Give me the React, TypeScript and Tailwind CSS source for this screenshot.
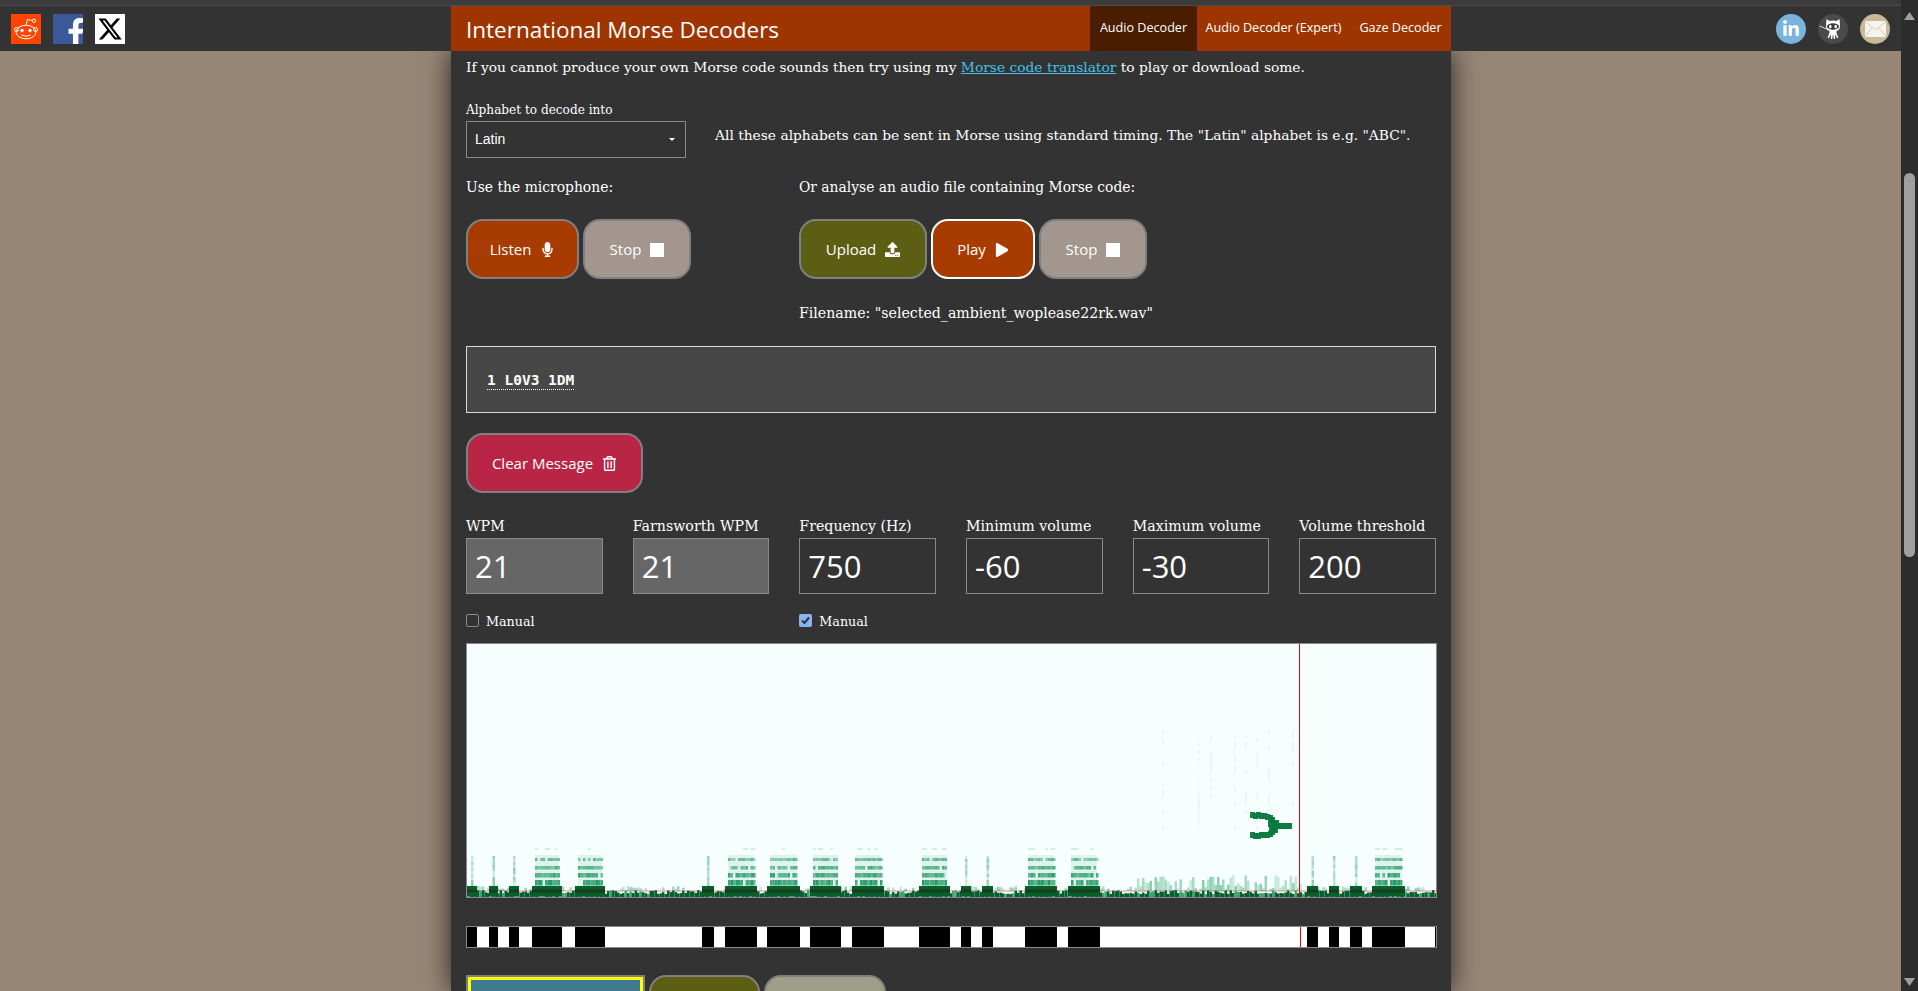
import { FaMicrophone, FaPlay, FaUpload, FaRegTrashAlt, FaFacebookF, FaLinkedinIn } from "react-icons/fa";
import { FaXTwitter } from "react-icons/fa6";
import type { ReactNode } from "react";

const SERIF = "font-['DejaVu_Serif',serif]";
const SANS = "font-['Open_Sans',sans-serif]";

// morse on/off segments, in page x coordinates
const SEGMENTS: [number, number][] = [
  [467, 477], [489, 498], [509, 519], [532, 562], [575, 605], [702, 714], [725, 757],
  [767, 800], [810, 841], [852, 884], [919, 950], [961, 971], [982, 993], [1025, 1057],
  [1068, 1100], [1307, 1318], [1329, 1339], [1350, 1362], [1372, 1405],
];

const makeRandom = (seed: number) => () => {
  seed = (seed * 1664525 + 1013904223) % 4294967296;
  return seed / 4294967296;
};

const Spectrogram = () => {
  const rnd = makeRandom(42);
  const cells: ReactNode[] = [];
  let k = 0;
  const cell = (x: number, y: number, w: number, h: number, fill: string, o = 1) =>
    cells.push(<rect key={k++} x={x} y={y} width={w} height={h} fill={fill} opacity={o} />);

  // threshold line sits under the signal
  cell(467, 890, 969, 2, "#f3b4b4", 0.8);

  // harmonics above each keyed segment
  SEGMENTS.forEach(([a, b]) => {
    if (b - a > 20) {
      cell(a + 3, 855, b - a - 6, 31, "#a6dcc6", 0.3);
      for (let x = a + 3; x < b - 3; x += 2.5) {
        [848, 858, 866, 873, 880].forEach((y, i) => {
          if (rnd() > (i === 0 ? 0.4 : 0.9)) return;
          const h = [2, 3, 3.5, 4.5, 5.5][i];
          cell(x, y, 2.5, h, "#0f8f55", i === 0 ? 0.15 : 0.25 + i * 0.09 + rnd() * 0.3);
        });
      }
    } else {
      const mid = (a + b) / 2;
      for (let y = 856; y < 886; y += 3) cell(mid - 1, y, 2.5, 3, "#0f8f55", 0.12 + rnd() * 0.35);
    }
  });

  // floor noise
  for (let x = 467; x < 1436; x += 2.5) {
    const loud = x > 1135 && x < 1300;
    const top = 890 + rnd() * 4;
    cell(x, top, 2.5, 898 - top, rnd() > 0.22 ? "#05602f" : "#3aa56f");
    if (rnd() > (loud ? 0.1 : 0.55)) {
      const h = (loud ? 14 : 3) * rnd() + 2;
      cell(x, 891 - h, 2.5, h, "#149a5c", 0.18 + rnd() * 0.3);
    }
  }

  // keyed carrier
  SEGMENTS.forEach(([a, b]) => {
    cell(a, 886, b - a, 10, "#05602f");
    cell(a, 889.5, b - a, 3, "#1c3e12");
  });

  // faint vertical traces
  [1162, 1210, 1198, 1234, 1245, 1256, 1268, 1292].forEach((x) => {
    for (let y = 730; y < 830; y += 4) {
      if (rnd() > 0.55) cell(x, y, 2, 4, "#b6e0ea", 0.2);
    }
  });

  // chirp
  const chirp = [
    [1250, 812], [1253, 813], [1256, 812], [1259, 813], [1262, 813], [1265, 814], [1268, 815], [1270, 817],
    [1271, 820], [1272, 823], [1271, 826], [1270, 829], [1268, 831], [1265, 832], [1262, 832], [1259, 832],
    [1256, 833], [1253, 833], [1250, 832], [1273, 822], [1276, 823], [1279, 823], [1282, 823], [1285, 823], [1287, 823],
    [1274, 820], [1273, 827], [1269, 825], [1268, 821],
  ];
  chirp.forEach(([x, y]) => cell(x, y, 5, 6, "#067a3e", 0.95));

  return (
    <svg viewBox="467 644 969 253" preserveAspectRatio="none" className="block h-full w-full">
      <rect x={467} y={644} width={969} height={253} fill="#f6fefe" />
      {cells}
      <rect x={1299} y={644} width={1} height={253} fill="#f00000" shapeRendering="crispEdges" />
    </svg>
  );
};

const MorseBar = () => (
  <svg viewBox="467 927 969 20" preserveAspectRatio="none" className="block h-full w-full" shapeRendering="crispEdges">
    <rect x={467} y={927} width={969} height={20} fill="#fff" />
    {SEGMENTS.map(([a, b]) => (
      <rect key={a} x={a} y={927} width={b - a} height={20} fill="#000" />
    ))}
    <rect x={1300} y={927} width={1} height={20} fill="#f00000" />
    <rect x={1435} y={927} width={1} height={20} fill="#000" />
  </svg>
);

const RedditIcon = () => (
  <div className="flex size-[30px] items-center justify-center bg-[#ff4500]">
    <svg viewBox="0 0 30 30" className="size-[30px]" fill="none" stroke="#fff" strokeWidth="1">
      <ellipse cx="15" cy="18" rx="10" ry="6.8" />
      <circle cx="5.5" cy="15.5" r="2" />
      <circle cx="24.5" cy="15.5" r="2" />
      <path d="M15 11 L16.5 5.5 L21 6.5" />
      <circle cx="23" cy="6.8" r="1.7" />
      <circle cx="11" cy="16.5" r="1.3" fill="#fff" />
      <circle cx="19" cy="16.5" r="1.3" fill="#fff" />
      <path d="M10.5 21 Q15 23.5 19.5 21" />
    </svg>
  </div>
);

const GithubIcon = () => (
  <svg viewBox="0 0 30 30" className="size-[30px]">
    <circle cx="15" cy="15" r="15" fill="#4a4a4a" />
    <path d="M8.5 5 L11.5 7 Q15 6.2 18.5 7 L21.5 5 L22 11 Q22.5 16 18.5 17 L18.5 19 L20.5 24 L19 24 L17.5 20 L17 25 L15.8 25 L15 20 L14.2 25 L13 25 L12.6 20 L11 24 L9.6 24 L11.5 18.5 L11.5 17 Q7.5 16 8 11 Z" fill="#fff" />
    <ellipse cx="15" cy="12.5" rx="6" ry="3.2" fill="#3a3a3a" />
    <ellipse cx="12.3" cy="12.6" rx="1.3" ry="1.9" fill="#fff" />
    <ellipse cx="17.7" cy="12.6" rx="1.3" ry="1.9" fill="#fff" />
    <path d="M1.5 12 L10 15.5" stroke="#ddd" strokeWidth="1" />
  </svg>
);

const MailIcon = () => (
  <svg viewBox="0 0 30 30" className="size-[30px]">
    <circle cx="15" cy="15" r="15" fill="#c9b998" />
    <rect x="5" y="7" width="21" height="16" rx="1.5" fill="#f6f4ef" />
    <path d="M5.5 8 L15.5 16 L25.5 8 M5.5 22 L12 14 M25.5 22 L19 14" fill="none" stroke="#d9ccb0" strokeWidth="1" />
  </svg>
);

const Btn = ({ className, children }: { className: string; children: ReactNode }) => (
  <div className={`flex h-[60px] items-center justify-center gap-[9px] rounded-[17px] border-2 pt-px text-[15px] text-white ${SANS} ${className}`}>
    {children}
  </div>
);

const StopSquare = () => <div className="size-[14px] bg-white" />;

const Field = ({ label, value, muted }: { label: string; value: string; muted?: boolean }) => (
  <div>
    <div className={`mb-[2px] h-[22px] whitespace-nowrap text-[14.2px] leading-[24px] text-white ${SERIF}`}>{label}</div>
    <div className={`flex h-[56px] items-center border border-[#8a8a8a] pl-[8px] pt-px text-[31px] text-white ${SANS} ${muted ? "bg-[#666666]" : ""}`}>
      {value}
    </div>
  </div>
);

const Manual = ({ checked }: { checked?: boolean }) => (
  <div className={`flex h-[20px] items-center gap-[7px] text-[12.7px] text-white ${SERIF}`}>
    {checked ? (
      <div className="flex size-[13px] items-center justify-center rounded-[2px] bg-[#8ab4f0]">
        <svg viewBox="0 0 13 13" className="size-[13px]" fill="none" stroke="#333" strokeWidth="2">
          <path d="M3 6.5 L5.5 9 L10 3.5" />
        </svg>
      </div>
    ) : (
      <div className="size-[13px] rounded-[2px] border border-[#8a8a8a]" />
    )}
    <span className="pt-[3px]">Manual</span>
  </div>
);

const Scrollbar = () => (
  <div className="flex w-[17px] shrink-0 flex-col items-center bg-[#2c2c2c]">
    <svg viewBox="0 0 17 17" className="h-[17px] w-[17px] shrink-0 mt-[6px]">
      <path d="M8.5 6 L14 14 L3 14 Z" fill="#9f9f9f" />
    </svg>
    <div className="mt-[150px] h-[384px] w-[11px] rounded-[6px] bg-[#9f9f9f]" />
    <div className="flex-1" />
    <svg viewBox="0 0 17 17" className="h-[17px] w-[17px] shrink-0">
      <path d="M3 4 L14 4 L8.5 12 Z" fill="#9f9f9f" />
    </svg>
  </div>
);

export default function App() {
  return (
    <div className="flex h-[991px] w-full overflow-hidden bg-[#978575]">
      <div className="flex min-w-0 flex-1 flex-col">
        <div className="relative z-10 h-[5px] shrink-0 bg-[#3c3c3c]" />
        <div className="relative z-10 h-px shrink-0 bg-[#4c4c4c]" />

        {/* Top bar */}
        <div className="relative z-10 flex h-[45px] shrink-0 bg-[#333333]">
          <div className="flex w-[451px] shrink-0 items-start gap-[12px] pl-[11px] pt-[8px]">
            <RedditIcon />
            <div className="relative size-[30px] overflow-hidden bg-[#3b5998]">
              <FaFacebookF className="absolute left-[9px] top-[4px] text-[28px] text-white" />
            </div>
            <div className="flex size-[30px] items-center justify-center bg-white">
              <FaXTwitter className="text-[26px] text-black" />
            </div>
          </div>
          <div className={`flex w-[1000px] shrink-0 items-stretch bg-[#9e3500] text-white ${SANS}`}>
            <div className="flex-1 pl-[15px] pt-px text-[22.5px] leading-[45px]">International Morse Decoders</div>
            <div className="flex w-[107px] items-center justify-center bg-[#4a1c00] text-[12.6px]">Audio Decoder</div>
            <div className="flex w-[153px] items-center justify-center text-[12.6px]">Audio Decoder (Expert)</div>
            <div className="flex w-[101px] items-center justify-center text-[12.6px]">Gaze Decoder</div>
          </div>
          <div className="flex flex-1 items-start justify-end gap-[12px] pr-[11px] pt-[8px]">
            <div className="relative size-[30px] overflow-hidden rounded-full bg-[#7ab4dc]">
              <FaLinkedinIn className="absolute left-[6px] top-[6px] text-[18px] text-white" />
            </div>
            <GithubIcon />
            <MailIcon />
          </div>
        </div>

        {/* Decoder panel */}
        <div className="flex min-h-0 flex-1 justify-start pl-[451px]">
          <div className={`w-[1000px] shrink-0 overflow-hidden bg-[#333333] px-[15px] pt-[4px] text-white shadow-[0_0_25px_rgba(0,0,0,0.75)] ${SERIF}`}>
            <p className="h-[24px] whitespace-nowrap text-[13.8px] leading-[24px]">
              If you cannot produce your own Morse code sounds then try using my{" "}
              <span className="text-[#45c0e8] underline">Morse code translator</span> to play or download some.
            </p>

            <div className="mt-[21px] flex items-end">
              <div className="w-[220px]">
                <div className="h-[21px] whitespace-nowrap text-[12.1px] leading-[20px]">Alphabet to decode into</div>
                <div className="flex h-[37px] items-center justify-between border border-[#8a8a8a] pb-px pl-[8px] pr-[10px] font-['Liberation_Sans',sans-serif] text-[14px]">
                  Latin
                  <div className="h-0 w-0 border-x-[3px] border-t-[3px] border-x-transparent border-t-white" />
                </div>
              </div>
              <p className="ml-[29px] h-[37px] whitespace-nowrap text-[13.8px] leading-[28px]">
                All these alphabets can be sent in Morse using standard timing. The "Latin" alphabet is e.g. "ABC".
              </p>
            </div>

            <div className="mt-[16px] flex">
              <div className="w-[333px]">
                <div className="h-[24px] text-[13.9px] leading-[26px]">Use the microphone:</div>
                <div className="mt-[21px] flex gap-[4px]">
                  <Btn className="w-[113px] border-[#808080] bg-[#a83c00]">
                    Listen <FaMicrophone className="text-[15px]" />
                  </Btn>
                  <Btn className="w-[108px] border-[#808080] bg-[#a3968e]">
                    Stop <StopSquare />
                  </Btn>
                </div>
              </div>
              <div>
                <div className="h-[24px] whitespace-nowrap text-[13.85px] leading-[26px]">Or analyse an audio file containing Morse code:</div>
                <div className="mt-[21px] flex gap-[4px]">
                  <Btn className="w-[128px] border-[#808080] bg-[#5c5f13]">
                    Upload <FaUpload className="text-[15px]" />
                  </Btn>
                  <Btn className="w-[104px] border-white bg-[#a83c00]">
                    Play <FaPlay className="text-[14px]" />
                  </Btn>
                  <Btn className="w-[108px] border-[#808080] bg-[#a3968e]">
                    Stop <StopSquare />
                  </Btn>
                </div>
                <div className="mt-[22px] h-[24px] whitespace-nowrap text-[14.15px] leading-[24px]">
                  Filename: "selected_ambient_woplease22rk.wav"
                </div>
              </div>
            </div>

            <div className="mt-[21px] flex h-[67px] items-center border border-[#d8d8d8] bg-[#474747] pl-[20px] pt-[2px]">
              <span className="border-b border-dotted border-white font-['DejaVu_Sans_Mono',monospace] text-[14.5px] font-bold leading-[18px]">
                1 L0V3 1DM
              </span>
            </div>

            <Btn className="mt-[20px] w-[177px] border-[#808080] bg-[#b92645]">
              Clear Message <FaRegTrashAlt className="text-[15px]" />
            </Btn>

            <div className="mt-[21px] grid grid-cols-6 gap-x-[30px]">
              <Field label="WPM" value="21" muted />
              <Field label="Farnsworth WPM" value="21" muted />
              <Field label="Frequency (Hz)" value="750" />
              <Field label="Minimum volume" value="-60" />
              <Field label="Maximum volume" value="-30" />
              <Field label="Volume threshold" value="200" />
            </div>

            <div className="mt-[16px] grid grid-cols-6 gap-x-[30px]">
              <Manual />
              <div />
              <Manual checked />
            </div>

            <div className="mt-[13px] h-[255px] w-[971px] border border-[#8a8a8a]">
              <Spectrogram />
            </div>

            <div className="mt-[28px] h-[22px] w-[971px] border border-[#8a8a8a]">
              <MorseBar />
            </div>

            <div className="mt-[27px] flex gap-[4px]">
              <div className="h-[60px] w-[179px] border-2 border-[#808080]">
                <div className="h-full border-[3px] border-[#ffff00] bg-[#3f7b90]" />
              </div>
              <Btn className="w-[111px] border-[#808080] bg-[#5c5f13]">{null}</Btn>
              <Btn className="w-[122px] border-[#808080] bg-[#a09e88]">{null}</Btn>
            </div>
          </div>
        </div>
      </div>
      <Scrollbar />
    </div>
  );
}
